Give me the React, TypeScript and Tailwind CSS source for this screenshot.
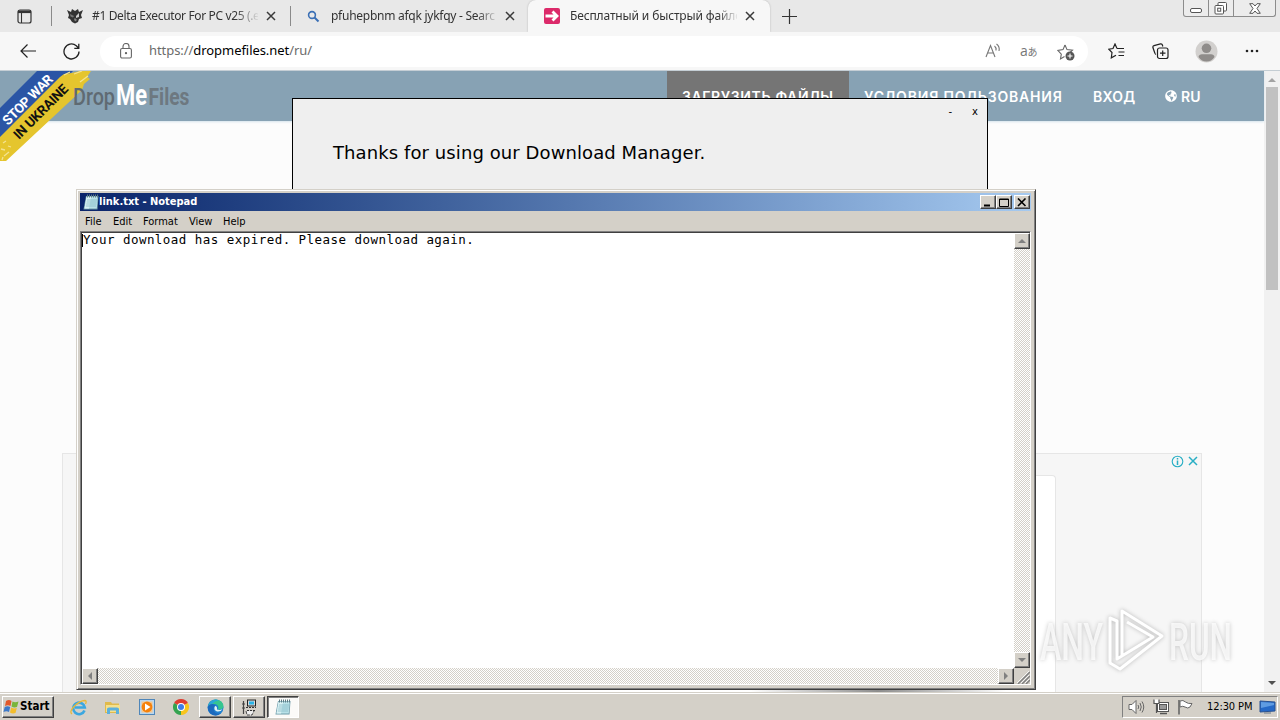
import React from "react";
import { FaGlobeAmericas } from "react-icons/fa";

const raised =
  "border border-t-white border-l-white border-r-[#404040] border-b-[#404040] shadow-[inset_-1px_-1px_0_#808080]";
const hatch =
  "bg-[#eae8e3] bg-[repeating-conic-gradient(#ffffff_0_25%,#d4d0c8_0_50%)] bg-[length:2px_2px]";

function Close() {
  return (
    <svg width="12" height="12" viewBox="0 0 12 12" className="shrink-0">
      <path d="M2 2L10 10M10 2L2 10" stroke="#3a3a3a" strokeWidth="1.5" fill="none" />
    </svg>
  );
}

function NotepadIcon() {
  return (
    <svg width="16" height="16" viewBox="0 0 16 16" className="shrink-0">
      <path d="M3 2H15.500L14.500 15.500H.5Z" fill="#6d9aa8" />
      <path d="M3.500 2.500H14.800L13.800 14.500H1.500Z" fill="#b9e1e8" />
      <path d="M3.500 3H8L6 14.500H1.500Z" fill="#d9f1f4" />
      <path d="M4 6H14M3.600 8H13.700M3.200 10H13.500M2.800 12H13.200" stroke="#7fb4c0" strokeWidth=".7" />
      <path d="M4.500 .5V3.500M6.500 .5V3.500M8.500 .5V3.500M10.500 .5V3.500M12.500 .5V3.500M14.500 .5V3.500" stroke="#5e7c85" strokeWidth="1" />
    </svg>
  );
}

function TabStrip() {
  return (
    <div className="relative flex h-8 shrink-0 items-center bg-[#e8e8e8] text-[12px] text-[#333]">
      <div className="flex w-[51px] justify-center pr-[3px]">
        <svg width="15" height="15" viewBox="0 0 15 15" fill="none" stroke="#333">
          <rect x="1" y="1" width="13" height="13" rx="2" strokeWidth="1.2" />
          <path d="M1 2.800H14" strokeWidth="2.6" />
          <path d="M4.500 4V14" strokeWidth="1.1" />
        </svg>
      </div>
      <div className="h-5 w-px bg-[#8a8a8a]" />
      <div className="flex w-[238px] items-center pl-[15px]">
        <svg width="16" height="16" viewBox="0 0 16 16">
          <path d="M0 2L4 4L5 1L8 3L11 1L12 4L16 2L14 7L15 10L12 11L11 14L8 15.500L5 14L3 11L1 10L2 7Z" fill="#333" />
          <path d="M3 6L7 8L6 9.500L3.500 8.500Z" fill="#777" />
          <path d="M12 5L9 8L9 10L12 9Z" fill="#ccc" />
          <path d="M7 11L8 10L10 12L8 13.500Z" fill="#888" />
        </svg>
        <div className="ml-[9px] w-[166px] whitespace-nowrap tracking-[-0.36px] [mask-image:linear-gradient(90deg,#000_86%,transparent_101%)]">
          #1 Delta Executor For PC v25 (.e
        </div>
        <div className="ml-[7px]"><Close /></div>
      </div>
      <div className="h-5 w-px bg-[#8a8a8a]" />
      <div className="flex w-[237px] items-center pl-4">
        <svg width="13" height="13" viewBox="0 0 13 13" fill="none" stroke="#3a6fb5">
          <circle cx="5" cy="5" r="3.400" strokeWidth="1.600" />
          <path d="M7.500 7.500L11.500 11.500" strokeWidth="2" />
        </svg>
        <div className="ml-[11px] w-[166px] whitespace-nowrap tracking-[-0.26px] [mask-image:linear-gradient(90deg,#000_88%,transparent_101%)]">
          pfuhepbnm afqk jykfqy - Searc
        </div>
        <div className="ml-[7px]"><Close /></div>
      </div>
      <div className="flex h-8 w-[242px] items-center rounded-t-lg bg-[#f7f7f7] pl-4 shadow-[0_0_2px_#b0b0b0]">
        <svg width="16" height="16" viewBox="0 0 16 16">
          <rect width="16" height="16" rx="2" fill="#dc2a6a" />
          <path d="M1.500 8H11M8.500 3.500L13 8L8.500 12.500" stroke="#fff" strokeWidth="2.800" fill="none" />
        </svg>
        <div className="ml-[10px] w-[167px] whitespace-nowrap tracking-[-0.14px] [mask-image:linear-gradient(90deg,#000_88%,transparent_101%)]">
          Бесплатный и быстрый файло
        </div>
        <div className="ml-[7px]"><Close /></div>
      </div>
      <svg width="15" height="15" viewBox="0 0 15 15" className="ml-[12px]">
        <path d="M0 7.500H15M7.500 0V15" stroke="#333" strokeWidth="1.200" />
      </svg>
      <div className="ml-auto mr-1 flex h-[17px] w-[93px] self-start rounded-b-[3px] border border-t-0 border-[#8c8c8c] bg-[#ececec]">
        <div className="flex w-[25px] items-center justify-center border-r border-[#8c8c8c] pt-1">
          <svg width="12" height="5" viewBox="0 0 12 5"><rect x=".5" y=".5" width="11" height="4" rx="1.500" fill="#fff" stroke="#555" /></svg>
        </div>
        <div className="flex w-[25px] items-center justify-center border-r border-[#8c8c8c]">
          <svg width="14" height="13" viewBox="0 0 14 13" fill="#fff" stroke="#555">
            <rect x="4" y=".5" width="8.500" height="8.500" rx="1" />
            <rect x="1" y="3.500" width="8.500" height="8.500" rx="1" />
            <rect x="3.700" y="6.200" width="3" height="3" />
          </svg>
        </div>
        <div className="flex flex-1 items-center justify-center">
          <svg width="12" height="11" viewBox="0 0 12 11"><path d="M.7.700H4L6 3L8 .700H11.300L8 5.500L11.300 10.300H8L6 8L4 10.300H.7L4 5.500Z" fill="#fff" stroke="#555" /></svg>
        </div>
      </div>
    </div>
  );
}

function Toolbar() {
  return (
    <div className="relative flex h-[39px] shrink-0 items-center border-b border-[#c4cdd3] bg-[#f7f7f7]">
      <svg width="16" height="14" viewBox="0 0 16 14" className="ml-5" fill="none" stroke="#222" strokeWidth="1.200">
        <path d="M16 7H1M7.500 .500L1 7L7.500 13.500" />
      </svg>
      <svg width="17" height="17" viewBox="0 0 17 17" className="ml-[27px]" fill="none" stroke="#222" strokeWidth="1.300">
        <path d="M16 8.500A7.500 7.500 0 1 1 13.300 2.700L15.500 5M15.800 .800V5.300H11.300" />
      </svg>
      <div className="ml-5 flex h-[31px] w-[988px] items-center rounded-full bg-white pl-5">
        <svg width="12" height="16" viewBox="0 0 12 16" fill="none" stroke="#666" strokeWidth="1.100">
          <rect x=".6" y="5.500" width="10.800" height="9.500" rx="1.500" />
          <path d="M3 5.500V3.500A3 3 0 0 1 9 3.500V5.500" />
          <circle cx="6" cy="10.200" r=".6" fill="#555" />
        </svg>
        <div className="ml-[17px] whitespace-nowrap text-[13px] tracking-[-0.06px] text-[#6b6b6b]">
          https://<span className="text-black">dropmefiles.net</span>/ru/
        </div>
        <svg width="17" height="16" viewBox="0 0 17 16" className="ml-auto" fill="none" stroke="#777" strokeWidth="1.100">
          <path d="M1 14L5.500 2.500L10 14M2.500 10H8.500" />
          <path d="M9.500 3Q11.500 4.500 11 7.500M11.500 1Q15 3.500 14 8" />
        </svg>
        <div className="ml-[18px] w-[18px] whitespace-nowrap font-['Open_Sans','Noto_Sans_CJK_JP',sans-serif] text-[14px] leading-4 tracking-[-0.3px] text-[#777]">
          a<span className="text-[10px]">あ</span>
        </div>
        <svg width="18" height="17" viewBox="0 0 18 17" className="ml-[19px] mr-[13px] translate-y-px" fill="none" stroke="#666" strokeWidth="1.100">
          <path d="M8 1L10 5.600L15.500 6.200L12 9.500M7.500 12.500L3.500 15L4.300 10.200L.8 6.400L6 5.600L8 1" />
          <circle cx="13" cy="12" r="4.500" fill="#555" stroke="none" />
          <path d="M10.500 12H15.500M13 9.500V14.500" stroke="#fff" />
        </svg>
      </div>
      <svg width="17" height="16" viewBox="0 0 17 16" className="ml-5" fill="none" stroke="#222" strokeWidth="1.200">
        <path d="M9 5.500L7 1L5 5.500L.8 6.200L4 9.500L3.300 14.800L8 12.200M9 5.500H16M10.500 9H16.500M10.500 12.500H16" />
      </svg>
      <svg width="17" height="17" viewBox="0 0 17 17" className="ml-[27px]" fill="none" stroke="#222" strokeWidth="1.200">
        <path d="M4 11.500Q3 11 2.800 10L.9 4.500Q.6 3 2 2.600L8.500 .900Q10 .600 10.400 2L10.800 3.500" />
        <rect x="5.500" y="5" width="10.500" height="10.500" rx="2" />
        <path d="M10.700 7.500V13M8 10.200H13.500" />
      </svg>
      <svg width="23" height="23" viewBox="0 0 23 23" className="ml-[26px]">
        <circle cx="11.500" cy="11.500" r="11" fill="#d2d0ce" />
        <circle cx="11.500" cy="8.300" r="4.800" fill="#8f8c8a" />
        <path d="M3.500 17Q4 14.300 7 14.300H16Q19 14.300 19.500 17Q16.500 21.500 11.500 21.500Q6.500 21.500 3.500 17Z" fill="#8f8c8a" />
      </svg>
      <svg width="14" height="4" viewBox="0 0 14 4" className="ml-[27px]" fill="#222">
        <circle cx="2" cy="2" r="1.300" /><circle cx="7" cy="2" r="1.300" /><circle cx="12" cy="2" r="1.300" />
      </svg>
    </div>
  );
}

function Ribbon() {
  return (
    <svg width="92" height="92" viewBox="0 71 92 92" className="absolute left-0 top-0" fontFamily="Roboto, sans-serif" fontWeight="700">
      <path d="M0 108L37 71H73L68 76L64 76L58 82L0 139Z" fill="#2a55a5" />
      <path d="M0 137L60 77L64 74L72 73L80 71H91L87 77L90 79L84 84L82 90L6 161H0Z" fill="#e5c52e" />
      <path d="M3 143L6 141M1 149L5 150M4 156L9 152M2 160L3 157M8 146L11 147M64 75L70 72M74 74L82 71M80 82L88 76" stroke="#f4e391" strokeWidth="1.300" />
      <text transform="translate(8 126) rotate(-45)" fontSize="13.500" fill="#fff" textLength="65">STOP WAR</text>
      <text transform="translate(19 140) rotate(-45)" fontSize="13.500" fill="#111" textLength="71">IN UKRAINE</text>
    </svg>
  );
}

function SiteHeader() {
  return (
    <div className="relative flex h-[50px] text-[14px] font-semibold text-white bg-[#87a2b4] font-['Inter',sans-serif] shadow-[0_1px_2px_#d5e3ec]">
      <Ribbon />
      <svg width="120" height="34" viewBox="73 80 120 34" className="ml-[73px] mt-[9px] relative" fontFamily="Roboto, sans-serif" fontWeight="700">
        <text x="73" y="105" fontSize="24" fontWeight="500" fill="#5f6a72" textLength="42" lengthAdjust="spacingAndGlyphs">Drop</text>
        <text x="116" y="105" fontSize="29" fill="#fff" textLength="31" lengthAdjust="spacingAndGlyphs">Me</text>
        <text x="148.500" y="105" fontSize="24" fill="#6d7880" textLength="41" lengthAdjust="spacingAndGlyphs">Files</text>
      </svg>
      <div className="ml-auto flex items-center pr-[62px] whitespace-nowrap">
        <div className="flex h-full w-[182px] items-center bg-[#757575] pl-[15px] tracking-[0.62px]">ЗАГРУЗИТЬ ФАЙЛЫ</div>
        <div className="w-[229px] pl-[15px] tracking-[0.82px]">УСЛОВИЯ ПОЛЬЗОВАНИЯ</div>
        <div className="w-[72px] pl-[15px] tracking-[0.3px]">ВХОД</div>
        <div className="flex w-[52px] items-center gap-1 pl-[15px]"><FaGlobeAmericas size={12} />RU</div>
      </div>
    </div>
  );
}

function Watermark() {
  return (
    <svg width="200" height="70" viewBox="1036 605 200 70" className="absolute left-[1036px] top-[605px] drop-shadow-[0_0_2px_#b5b5b5]" fontFamily="Roboto, sans-serif" fontWeight="500">
      <text x="1040" y="660" fontSize="51" fill="#fff" fillOpacity=".75" textLength="63" lengthAdjust="spacingAndGlyphs">ANY</text>
      <text x="1169" y="660" fontSize="51" fill="#fff" fillOpacity=".75" textLength="63" lengthAdjust="spacingAndGlyphs">RUN</text>
      <g fill="none" stroke="#fff" strokeWidth="3" strokeLinejoin="round">
        <path d="M1122 655V611L1162 636L1120 669L1110 663V618L1117 621V659L1153 637L1127 622" />
      </g>
    </svg>
  );
}

function Page() {
  return (
    <div className="flex min-h-0 flex-1">
      <div className="flex w-[1264px] flex-col bg-[#fcfcfc]">
        <SiteHeader />
        <div className="ml-[62px] mt-[332px] flex w-[1140px] flex-1 border border-b-0 border-[#e6e6e6] bg-[#f6f6f6]">
          <div className="ml-[50px] mt-[21px] w-[943px] rounded-tr border-r border-t border-[#e6e6e6] bg-white" />
          <div className="ml-auto mr-[2px] mt-[1px] flex h-3 items-center gap-[3px]">
            <svg width="13" height="13" viewBox="0 0 13 13" fill="none" stroke="#28aec4"><circle cx="6.500" cy="6.500" r="5.300" strokeWidth="1.100" /><path d="M6.500 5.500V10M6.500 3V4.400" strokeWidth="1.500" /></svg>
            <svg width="12" height="12" viewBox="0 0 12 12"><path d="M2 2L10 10M10 2L2 10" stroke="#28aec4" strokeWidth="1.500" /></svg>
          </div>
        </div>
      </div>
      <div className="flex w-4 flex-col items-center bg-[#f1f1f1]">
        <svg width="8" height="4" viewBox="0 0 8 4" className="mt-[7px]"><path d="M0 4L4 0L8 4Z" fill="#a3a3a3" /></svg>
        <div className="mt-[5px] h-[203px] w-3 bg-[#c1c1c1]" />
        <svg width="8" height="4" viewBox="0 0 8 4" className="mb-[7px] mt-auto"><path d="M0 0L4 4L8 0Z" fill="#505050" /></svg>
      </div>
    </div>
  );
}

function Dialog() {
  return (
    <div className="absolute left-[292px] top-[98px] h-[592px] w-[696px] border border-black bg-[#efefef] font-['DejaVu_Sans',sans-serif] text-black">
      <div className="flex justify-end gap-5 pr-[9px] pt-[5px] text-[10px] leading-4"><span>-</span><span>x</span></div>
      <div className="pl-10 pt-[21px] text-[18px] leading-6 tracking-[0.09px] whitespace-nowrap">Thanks for using our Download Manager.</div>
    </div>
  );
}

function Arrow({ d }: { d: string }) {
  return (
    <div className={`flex h-4 w-4 shrink-0 items-center justify-center bg-[#d4d0c8] ${raised}`}>
      <svg width="8" height="8" viewBox="0 0 8 8"><path d={d} fill="#808080" /></svg>
    </div>
  );
}

function TitleButton({ children }: { children: React.ReactNode }) {
  return (
    <div className={`flex h-[14px] w-4 items-center justify-center bg-[#d4d0c8] ${raised}`}>
      <svg width="10" height="9" viewBox="0 0 10 9" fill="none" stroke="#000">{children}</svg>
    </div>
  );
}

function Notepad() {
  return (
    <div className="absolute left-[76px] top-[189px] flex h-[501px] w-[960px] flex-col border border-b-[#404040] border-l-[#d4d0c8] border-r-[#404040] border-t-[#d4d0c8] bg-[#d4d0c8] pb-1 pl-[3px] pr-1 pt-[3px] font-['DejaVu_Sans_Condensed','DejaVu_Sans',sans-serif] text-[11px] text-black shadow-[inset_1px_1px_0_#fff,inset_-1px_-1px_0_#808080]">
      <div className="flex h-[18px] shrink-0 items-center bg-linear-to-r from-[#0a246a] to-[#a6caf0] pl-[3px] pr-[1px]">
        <NotepadIcon />
        <span className="font-stretch-condensed whitespace-nowrap pt-px font-bold text-white">link.txt - Notepad</span>
        <div className="ml-auto flex">
          <TitleButton><path d="M1 7.500H7" strokeWidth="2" /></TitleButton>
          <TitleButton><path d="M.5 1H9.500V8.500H.5Z M.5 1.500H9.500" /></TitleButton>
          <div className="ml-[2px]"><TitleButton><path d="M1 .500L8.500 8M8.500 .500L1 8" strokeWidth="1.600" /></TitleButton></div>
        </div>
      </div>
      <div className="flex h-[20px] shrink-0 items-center font-stretch-condensed leading-4 pt-px">
        <span className="w-[28px] pl-[5px]">File</span>
        <span className="w-[30px] pl-[5px]">Edit</span>
        <span className="w-[46px] pl-[5px]">Format</span>
        <span className="w-[34px] pl-[5px]">View</span>
        <span className="pl-[5px]">Help</span>
      </div>
      <div className="flex min-h-0 flex-1 flex-col border border-b-white border-l-[#808080] border-r-white border-t-[#808080] bg-white shadow-[inset_1px_1px_0_#404040]">
        <div className="flex min-h-0 flex-1 pl-[1px] pt-[1px]">
          <div className="flex flex-1 items-start">
            <div className="mt-px h-[13px] w-px bg-black" />
            <div className="font-['DejaVu_Sans_Mono',monospace] text-[12.5px] leading-[14px] tracking-[0.46px] whitespace-pre">Your download has expired. Please download again.</div>
          </div>
          <div className={`flex w-4 flex-col justify-between ${hatch}`}>
            <Arrow d="M0 6L4 2L8 6Z" />
            <Arrow d="M0 2L4 6L8 2Z" />
          </div>
        </div>
        <div className="flex h-4 shrink-0 pl-px">
          <div className={`flex flex-1 justify-between ${hatch}`}>
            <Arrow d="M6 0L2 4L6 8Z" />
            <Arrow d="M2 0L6 4L2 8Z" />
          </div>
          <div className="flex w-4 items-end justify-end bg-[#d4d0c8]">
            <svg width="13" height="13" viewBox="0 0 13 13"><path d="M1 13L13 1M5 13L13 5M9 13L13 9" stroke="#808080" strokeWidth="1.500" /><path d="M0 12L12 0M4 12L12 4M8 12L12 8" stroke="#fff" strokeWidth=".8" /></svg>
          </div>
        </div>
      </div>
    </div>
  );
}

function Taskbar() {
  return (
    <div className="flex h-7 shrink-0 items-center border-t border-[#d4d0c8] bg-[#d4d0c8] pl-[2px] pr-[2px] pt-[1px] shadow-[inset_0_1px_0_#fff] font-['DejaVu_Sans_Condensed','DejaVu_Sans',sans-serif] text-[11px] text-black">
      <div className={`flex h-[22px] w-[52px] items-center ${raised}`}>
        <svg width="17" height="16" viewBox="0 0 17 16" className="shrink-0">
          <path d="M3 2Q6 0 8.500 2L7.500 7Q5 5.500 2 7Z" fill="#e2592b" />
          <path d="M9.500 2.500Q12 4 15.500 2.500L14 8Q11 9 8.500 7.500Z" fill="#7ab53a" />
          <path d="M1.700 8Q4.500 6.500 7.200 8L6 13Q3.500 11.500 .5 13Z" fill="#3d79c9" />
          <path d="M8.200 8.500Q11 10 13.800 9L12.500 14Q9.500 15 7 13.500Z" fill="#f3bd2c" />
        </svg>
        <span className="font-stretch-condensed font-bold text-[11.500px]">Start</span>
      </div>
      <svg width="18" height="17" viewBox="0 0 18 17" className="ml-[16px]" fill="none">
        <path d="M14.500 11.500A5.800 5.800 0 1 1 14.800 8.500H5" stroke="#3ba7e0" strokeWidth="2.600" />
        <path d="M2 15Q-1 13 4 7.500Q10 1.500 15 1.500Q17 2 15.500 5" stroke="#e8b83a" strokeWidth="1.300" />
      </svg>
      <svg width="17" height="16" viewBox="0 0 17 16" className="ml-4">
        <path d="M1 3H7L8 4.500H15V14H1Z" fill="#e0ba4c" />
        <path d="M2 6H16V13H2Z" fill="#f5e08c" />
        <path d="M3 10Q3 8.500 5 8.500H13Q15 8.500 15 10V15H12V11.500H6V15H3Z" fill="#5cb0dc" />
      </svg>
      <svg width="16" height="16" viewBox="0 0 16 16" className="ml-[18px]">
        <rect x=".5" y=".5" width="15" height="15" fill="#b8d6ef" stroke="#4f86b9" />
        <rect x="2.500" y="2.500" width="11" height="11" fill="#f7c58c" /><circle cx="8" cy="8" r="5.400" fill="#f5810b" />
        <path d="M6 4.500L11.500 8L6 11.500Z" fill="#fff" />
      </svg>
      <svg width="16" height="16" viewBox="0 0 16 16" className="ml-[18px]">
        <path d="M8 8L1.070 4A8 8 0 0 1 14.930 4Z" fill="#df3d31" />
        <path d="M8 8L14.930 4A8 8 0 0 1 8 16Z" fill="#f8c51c" />
        <path d="M8 8V16A8 8 0 0 1 1.070 4Z" fill="#34a350" />
        <circle cx="8" cy="8" r="4" fill="#fff" /><circle cx="8" cy="8" r="3" fill="#3f7de8" />
      </svg>
      <div className={`ml-[10px] flex h-[22px] w-8 items-center justify-center ${raised}`}>
        <svg width="17" height="17" viewBox="0 0 17 17">
          <circle cx="8.500" cy="8.500" r="8" fill="#1f7fd0" />
          <path d="M1 7Q3 .5 9 .5Q16 1 16.500 7.500Q16 11 11 10.500Q12.500 6 8 5Q3.500 4.500 1 7Z" fill="#36c58f" />
          <path d="M1 7Q3 .5 9 .5L12 1.200Q8 2 5 5Q2 5.500 1 7Z" fill="#2aa6d8" />
          <path d="M1 7Q6 3 8.500 7Q5.500 8 7 12Q9 16 14 14Q11 17.500 6 16Q0 13.500 1 7Z" fill="#1b69bd" />
          <path d="M8 7Q10.500 7 10 10.500Q13 11.500 15.500 10Q14 13 10 12.500Q6 11 8 7Z" fill="#dff2f4" />
        </svg>
      </div>
      <div className={`ml-[2px] flex h-[22px] w-8 items-center justify-center ${raised}`}>
        <svg width="16" height="17" viewBox="0 0 16 17">
          <rect x="6.500" y="1" width="8" height="6" fill="#d8d8d8" stroke="#222" />
          <rect x="8" y="2.500" width="5" height="3" fill="#29b3e8" />
          <path d="M2.500 2V15M1 5H4M1 9H4" stroke="#444" strokeWidth="1.200" />
          <path d="M5 8.500H15M6 11.500H14" stroke="#333" strokeDasharray="2 1" />
          <path d="M5 12L6 16H11L13 12" stroke="#444" fill="#eee" strokeDasharray="3 1" />
        </svg>
      </div>
      <div className="ml-[2px] flex h-[22px] w-8 items-center justify-center border border-b-white border-l-[#404040] border-r-white border-t-[#404040] bg-[#fbfaf8] shadow-[inset_1px_1px_0_#808080]">
        <NotepadIcon />
      </div>
      <div className="ml-auto flex h-[22px] w-[156px] items-center border border-b-white border-l-[#808080] border-r-white border-t-[#808080] pl-[5px]">
        <svg width="17" height="16" viewBox="0 0 17 16" fill="none" stroke="#666">
          <path d="M1 5.500H4L8 1.500V14.500L4 10.500H1Z" fill="#fff" />
          <path d="M10 6Q11.500 8 10 10M12 4Q14.500 8 12 12M14 2.500Q17.500 8 14 13.500" />
        </svg>
        <svg width="17" height="16" viewBox="0 0 17 16" className="ml-[8px]" fill="none" stroke="#555">
          <rect x="4.500" y="3.500" width="11" height="9" fill="#fff" /><rect x="6.500" y="5.500" width="7" height="5" fill="#999" />
          <path d="M7 14.500H14" strokeWidth="1.500" />
          <path d="M1 .500V4.500H6V.500M3.500 4.500V14" strokeWidth="1.200" fill="#fff" />
        </svg>
        <svg width="16" height="16" viewBox="0 0 16 16" className="ml-[7px]" fill="#fff" stroke="#666">
          <path d="M2 1V15.500" strokeWidth="1.600" />
          <path d="M3 2Q6 .5 8.500 3Q11 5 15 4.500L13 8Q11 10 8 8Q6 6.500 3 8Z" />
        </svg>
        <span className="ml-[14px] w-[46px] whitespace-nowrap pt-px font-stretch-condensed tracking-[-0.1px]">12:30 PM</span>
        <svg width="17" height="14" viewBox="0 0 17 14" className="ml-[6px]">
          <path d="M1 1L16 2V11L1 12Z" fill="#2569c7" stroke="#2a5290" />
          <path d="M2 2L15 3V5L2 8Z" fill="#5f9ce2" /><path d="M5 13H12" stroke="#678" />
        </svg>
      </div>
    </div>
  );
}

export default function App() {
  return (
    <div className="relative flex h-[720px] w-[1280px] flex-col overflow-hidden font-['Noto_Sans','Open_Sans',sans-serif]">
      <TabStrip />
      <Toolbar />
      <Page />
      <Taskbar />
      <Dialog />
      <div className="absolute left-[750px] top-[689px] h-[3px] w-[256px] bg-linear-to-r from-transparent via-[#8d8d8d] to-transparent" />
      <Notepad />
      <Watermark />
    </div>
  );
}
